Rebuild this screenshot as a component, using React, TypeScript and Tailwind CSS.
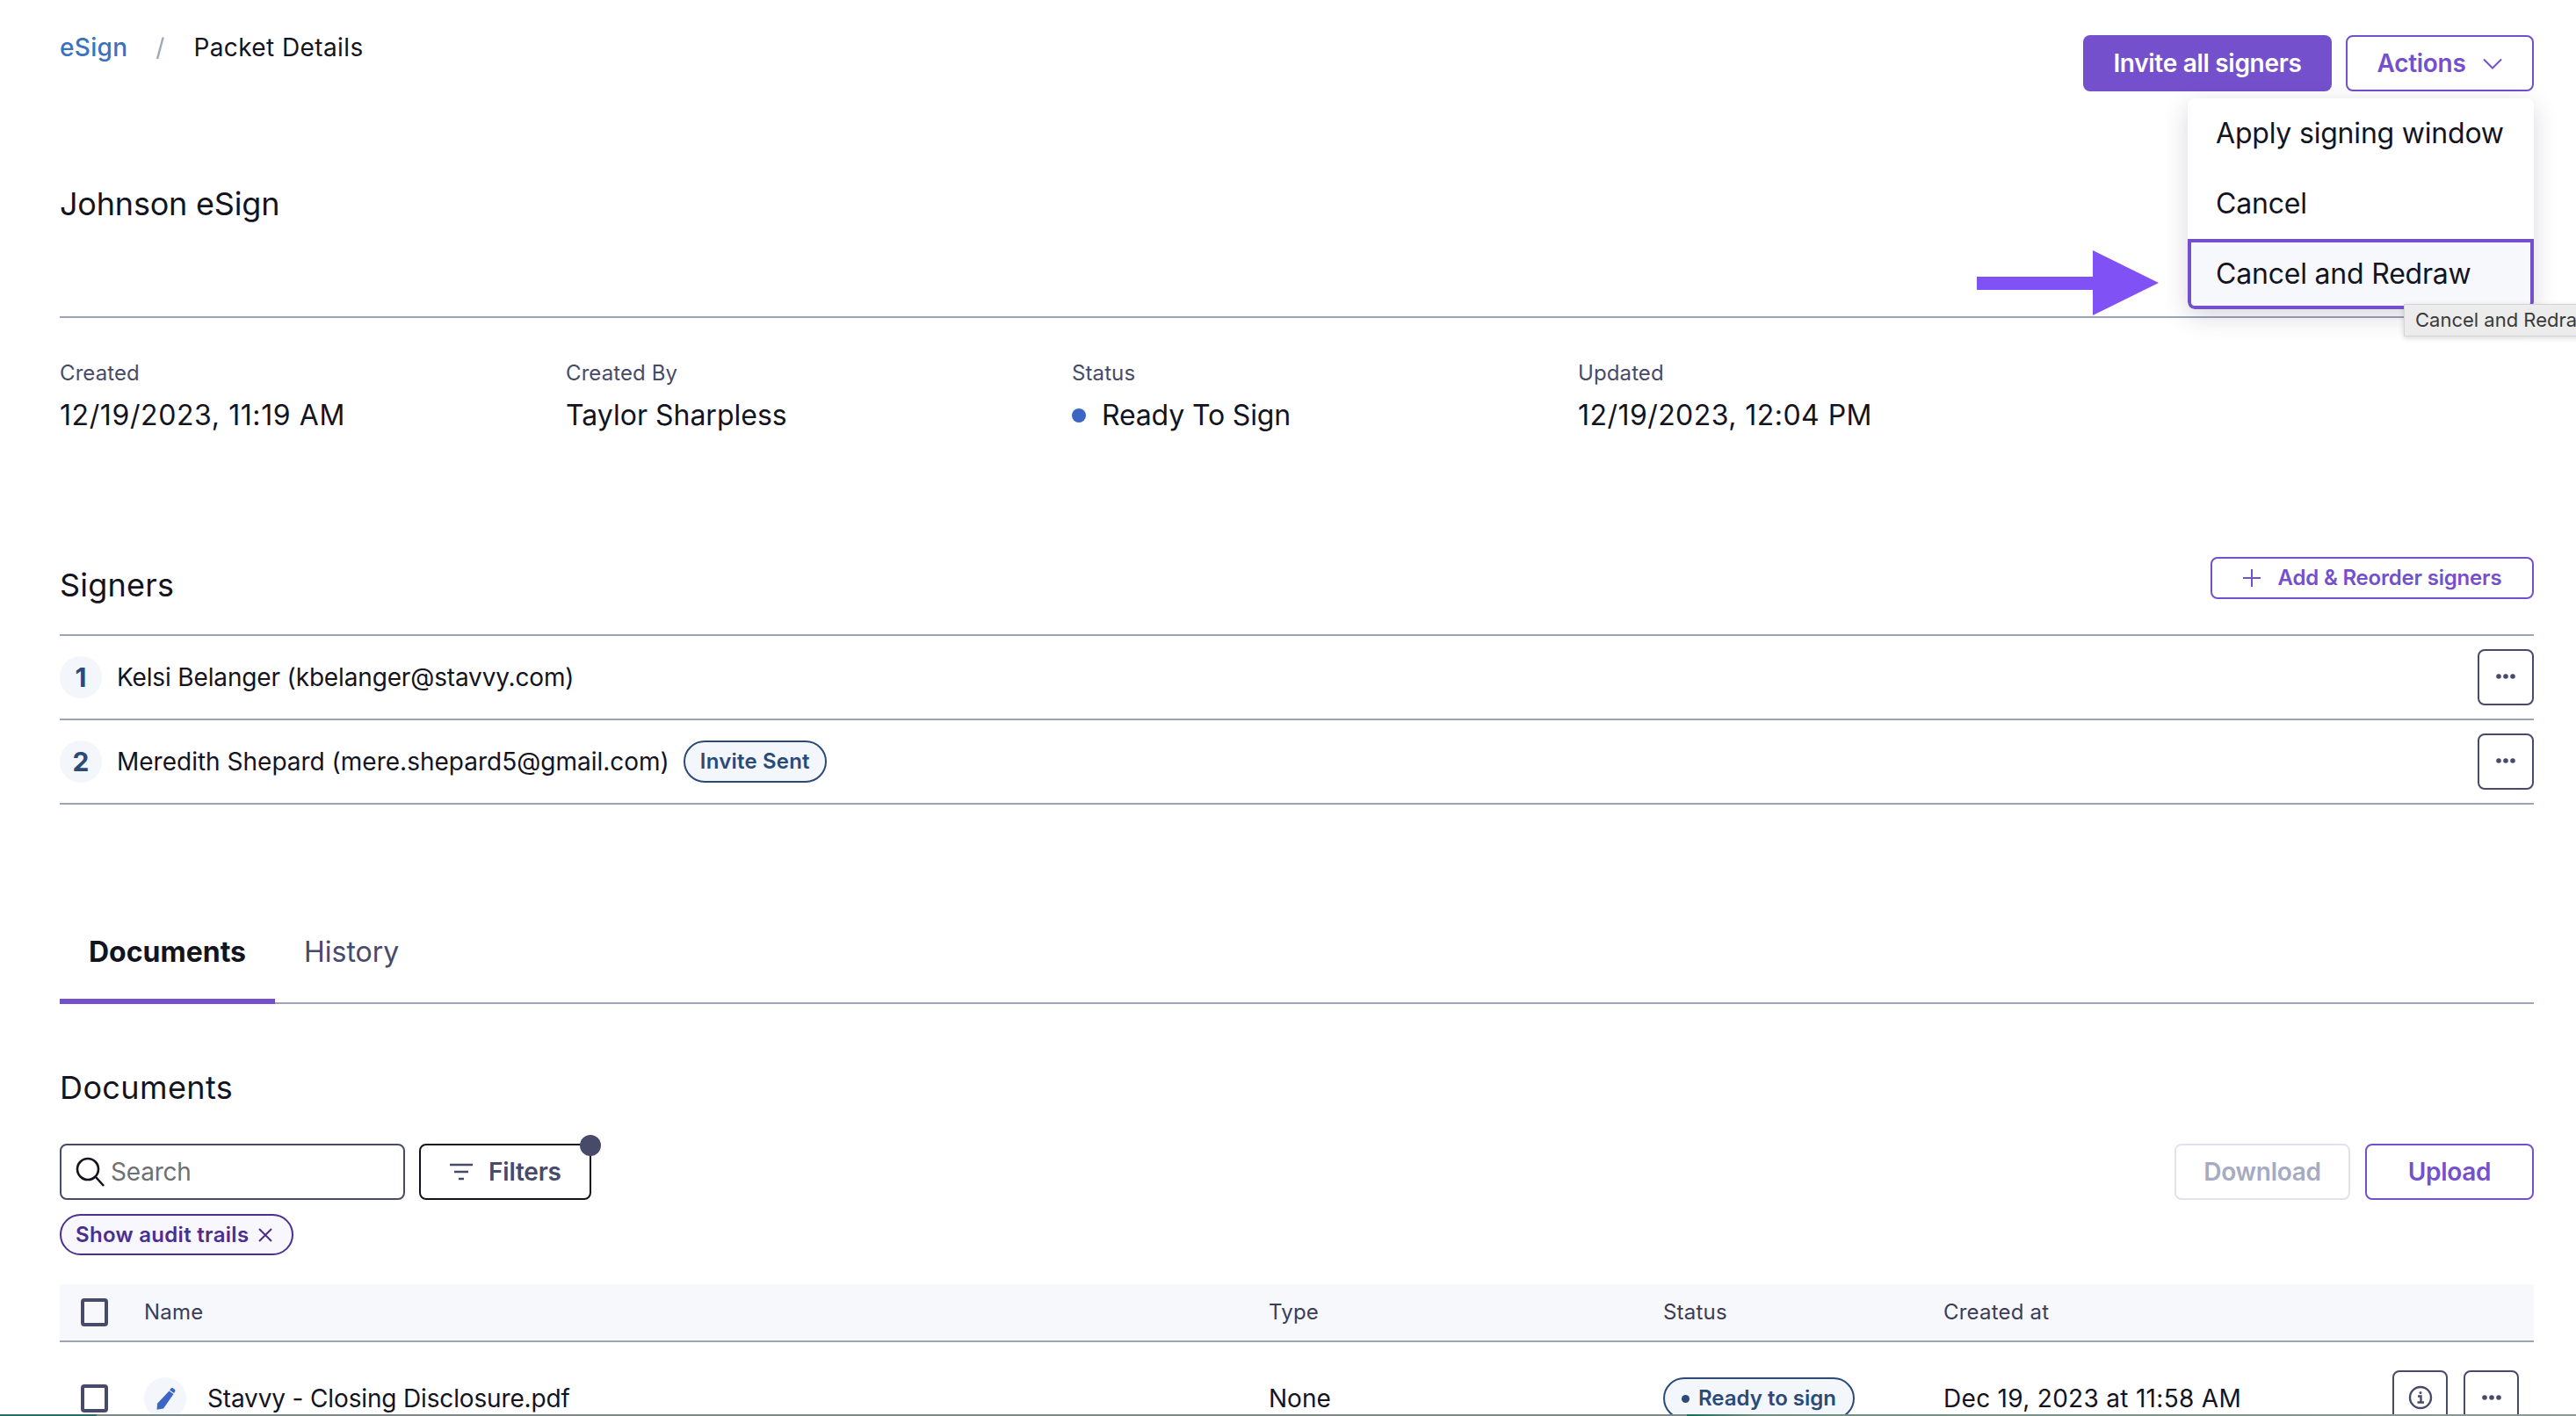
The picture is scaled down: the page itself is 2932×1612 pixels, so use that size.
import React from "react";

const Dots = ({ className = "" }: { className?: string }) => (
  <button className={`flex items-center justify-center rounded-lg border-2 border-[#484a6a] bg-white pb-[3px] ${className}`}>
    <svg width="24" height="8" viewBox="0 0 24 8" fill="#484a6a">
      <circle cx="4" cy="4" r="2.8" />
      <circle cx="12" cy="4" r="2.8" />
      <circle cx="20" cy="4" r="2.8" />
    </svg>
  </button>
);

const Signer = ({ n, text, badge, track }: { n: number; text: string; badge?: string; track: string }) => (
  <div className="flex h-[96px] items-center border-b-2 border-[#9da3b8]">
    <div className="flex h-[48px] w-[48px] items-center justify-center rounded-full bg-[#f3f6fb] text-[30px] font-bold text-[#2c4a77]">{n}</div>
    <div className={`ml-[17px] text-[28px] text-[#14141f] ${track}`}>{text}</div>
    {badge && (
      <div className="ml-[16px] flex h-[48px] w-[163px] items-center justify-center rounded-full border-2 border-[#2c4a77] bg-[#f3f6fb] text-[24px] font-semibold tracking-[0.2px] text-[#2c4a77]">{badge}</div>
    )}
    <Dots className="ml-auto h-[64px] w-[64px]" />
  </div>
);

const Meta = ({ label, children, track = "" }: { label: string; children: React.ReactNode; track?: string }) => (
  <div className="w-[576px]">
    <div className="text-[24px] leading-[32px] tracking-[0.1px] text-[#484a6a]">{label}</div>
    <div className={`mt-[12px] flex items-center text-[32px] leading-[40px] text-[#14141f] ${track}`}>{children}</div>
  </div>
);

export default function App() {
  return (
    <div className="relative h-[1612px] w-[2932px] overflow-hidden bg-white pl-[68px] pr-[48px] font-['Inter',sans-serif] text-[#14141f]">
      <div className="flex items-start justify-between pt-[40px]">
        <div className="flex items-center text-[28px] leading-[28px]">
          <span className="font-medium tracking-[0.3px] text-[#3b72bd]">eSign</span>
          <span className="ml-[32px] text-[#9da3b8]">/</span>
          <span className="ml-[33px] tracking-[0.4px]">Packet Details</span>
        </div>
        <div className="flex gap-[16px]">
          <button className="flex h-[64px] w-[283px] items-center justify-center rounded-lg bg-[#7450cc] text-[28px] font-semibold tracking-[-0.3px] text-white">Invite all signers</button>
          <button className="flex h-[64px] w-[214px] items-center justify-center gap-[20px] rounded-lg border-2 border-[#7450cc] bg-white text-[28px] font-semibold tracking-[-0.3px] text-[#7450cc]">
            Actions
            <svg width="22" height="13" viewBox="0 0 22 13" fill="none" stroke="#7450cc" strokeWidth="2"><path d="M1 1.500l10 10 10-10" /></svg>
          </button>
        </div>
      </div>

      <h1 className="mt-[106px] text-[36px] font-normal leading-[44px] tracking-[-0.2px]">Johnson eSign</h1>
      <div className="mt-[106px] border-t-2 border-[#9da3b8]" />

      <div className="mt-[47px] flex">
        <Meta label="Created" track="tracking-[0.6px]">12/19/2023, 11:19 AM</Meta>
        <Meta label="Created By">Taylor Sharpless</Meta>
        <Meta label="Status">
          <span className="mr-[18px] h-[16px] w-[16px] rounded-full bg-[#3b66c4]" />
          <span className="tracking-[-0.15px]">Ready To Sign</span>
        </Meta>
        <Meta label="Updated" track="tracking-[0.45px]">12/19/2023, 12:04 PM</Meta>
      </div>

      <div className="mt-[141px] flex h-[48px] items-start justify-between">
        <h2 className="pt-[10px] text-[36px] font-normal leading-[44px] tracking-[0.2px]">Signers</h2>
        <button className="flex h-[48px] w-[368px] items-center justify-center gap-[20px] rounded-lg border-2 border-[#7450cc] text-[24px] font-semibold tracking-[-0.2px] text-[#7450cc]">
          <svg width="20" height="20" viewBox="0 0 20 20" stroke="#7450cc" strokeWidth="2"><path d="M10 0v20M0 10h20" /></svg>
          Add &amp; Reorder signers
        </button>
      </div>

      <div className="mt-[40px] border-t-2 border-[#9da3b8]">
        <Signer n={1} text="Kelsi Belanger (kbelanger@stavvy.com)" track="tracking-[-0.15px]" />
        <Signer n={2} text="Meredith Shepard (mere.shepard5@gmail.com)" badge="Invite Sent" track="tracking-[0px]" />
      </div>

      <div className="mt-[115px] flex border-b-2 border-[#9da3b8]">
        <div className="-mb-[2px] flex h-[112px] w-[245px] items-center justify-center border-b-[6px] border-[#7450cc] text-[32px] font-bold">Documents</div>
        <div className="ml-[33px] flex h-[110px] items-center pb-[4px] text-[32px] text-[#484a6a]">History</div>
      </div>

      <h2 className="mt-[73px] text-[36px] font-normal leading-[44px] tracking-[0.4px]">Documents</h2>

      <div className="mt-[42px] flex h-[64px]">
        <div className="flex h-full w-[393px] items-center rounded-lg border-2 border-[#484a6a] pl-[15px]">
          <svg width="36" height="36" viewBox="0 0 36 36" fill="none" stroke="#14141f" strokeWidth="2.6"><circle cx="15" cy="15" r="12" /><path d="M24 24l9 10" /></svg>
          <span className="ml-[5px] text-[28px] tracking-[-0.2px] text-[#707070]">Search</span>
        </div>
        <button className="relative ml-[16px] flex h-full w-[196px] items-center rounded-lg border-2 border-[#14141f] pl-[33px] text-[28px] font-semibold tracking-[-0.2px] text-[#484a6a]">
          <svg width="26" height="20" viewBox="0 0 26 20" stroke="#484a6a" strokeWidth="2.4"><path d="M0 2h26M5 10h16M10 18h6" /></svg>
          <span className="ml-[18px]">Filters</span>
          <span className="absolute -right-[13px] -top-[12px] h-[24px] w-[24px] rounded-full bg-[#484a6a]" />
        </button>
        <button className="ml-auto flex h-full w-[200px] items-center justify-center rounded-lg border-2 border-[#e0e3ee] text-[28px] font-semibold tracking-[-0.3px] text-[#a6abc2]">Download</button>
        <button className="ml-[17px] flex h-full w-[192px] items-center justify-center rounded-lg border-2 border-[#7450cc] text-[28px] font-semibold tracking-[-0.3px] text-[#7450cc]">Upload</button>
      </div>

      <div className="mt-[16px] flex h-[47px] w-[266px] items-center justify-between rounded-full border-2 border-[#4a2f8e] bg-[#f8f7fd] pl-[16px] pr-[22px] text-[24px] font-semibold tracking-[0.3px] text-[#4a2f8e]">
        Show audit trails
        <svg width="16" height="16" viewBox="0 0 16 16" stroke="#4a2f8e" strokeWidth="2"><path d="M1 1l14 14M15 1L1 15" /></svg>
      </div>

      <div className="mt-[33px] grid h-[66px] grid-cols-[96px_1280px_449px_319px_1fr] items-center border-b-2 border-[#9da3b8] bg-[#f7f8fc] text-[24px] tracking-[0.2px] text-[#3c3d58]">
        <div className="pl-[24px]"><div className="h-[32px] w-[31px] rounded-[4px] border-4 border-[#484a6a]" /></div>
        <div>Name</div>
        <div>Type</div>
        <div>Status</div>
        <div>Created at</div>
      </div>

      <div className="grid h-[96px] grid-cols-[96px_1280px_449px_319px_1fr] items-center pt-[32px] text-[28px]">
        <div className="pl-[24px]"><div className="h-[32px] w-[31px] rounded-[4px] border-4 border-[#484a6a]" /></div>
        <div className="flex items-center">
          <div className="flex h-[48px] w-[48px] items-center justify-center rounded-full bg-[#f3f6fb]">
            <svg width="24" height="26" viewBox="0 0 24 26" fill="#3b66c4"><path d="M16.5 4.5l5 3.4L10 24.5l-7.5 1.2.6-7zM18 2.2c.8-1.2 2-1.4 3-.7l1.500 1c1 .7 1.200 1.900.5 3l-1 1.400-5-3.400z" /></svg>
          </div>
          <span className="ml-[24px] tracking-[-0.15px]">Stavvy - Closing Disclosure.pdf</span>
        </div>
        <div>None</div>
        <div>
          <div className="flex h-[48px] w-[218px] items-center justify-center gap-[10px] rounded-full border-2 border-[#2c4a77] bg-[#f3f6fb] text-[24px] font-semibold tracking-[0px] text-[#2c4a77]">
            <span className="h-[9px] w-[9px] rounded-full bg-[#2c4a77]" />
            Ready to sign
          </div>
        </div>
        <div className="flex items-center justify-between pr-[17px]">
          <span className="tracking-[0.3px]">Dec 19, 2023 at 11:58 AM</span>
          <div className="flex gap-[18px]">
            <button className="flex h-[64px] w-[63px] items-center justify-center rounded-lg border-2 border-[#484a6a] pb-[3px]">
              <svg width="28" height="28" viewBox="0 0 28 28" fill="none" stroke="#484a6a" strokeWidth="2.4"><circle cx="14" cy="14" r="12" /><path d="M11 12.500h3.500v7M10.500 19.500h7.500" /><circle cx="14" cy="8.500" r="1.500" fill="#484a6a" stroke="none" /></svg>
            </button>
            <Dots className="h-[64px] w-[63px]" />
          </div>
        </div>
      </div>

      <div className="absolute right-[48px] top-[112px] w-[394px] overflow-hidden rounded-lg bg-white text-[32px] tracking-[-0.2px] shadow-[0_8px_28px_rgba(40,40,70,0.18)]">
        <div className="flex h-[80px] items-center pl-[32px]">Apply signing window</div>
        <div className="flex h-[80px] items-center pl-[32px]">Cancel</div>
        <div className="flex h-[80px] items-center rounded-b-lg border-4 border-[#7450cc] bg-[#f7f8fc] pl-[28px]">Cancel and Redraw</div>
      </div>

      <div className="absolute left-[2736px] top-[346px] flex h-[37px] w-[260px] items-center whitespace-nowrap border border-[#d4d4d4] bg-[#ececec] pl-[12px] text-[22px] text-[#3a3a3a] shadow-[0_2px_6px_rgba(0,0,0,0.15)]">Cancel and Redraw</div>

      <svg className="absolute left-[2250px] top-[284px]" width="208" height="76" viewBox="0 0 208 76" fill="#8052f6">
        <path d="M0 31h132V1l75 37-75 37V46H0z" />
      </svg>

      <div className="absolute bottom-0 left-0 h-[2px] w-full bg-[linear-gradient(90deg,#2f6b6a_0,#2f6b6a_110px,#7d8a88_110px,#7d8a88_1920px,#1f6b5c_1920px,#6f9080_2000px,#8a9a95_2932px)]" />
    </div>
  );
}
